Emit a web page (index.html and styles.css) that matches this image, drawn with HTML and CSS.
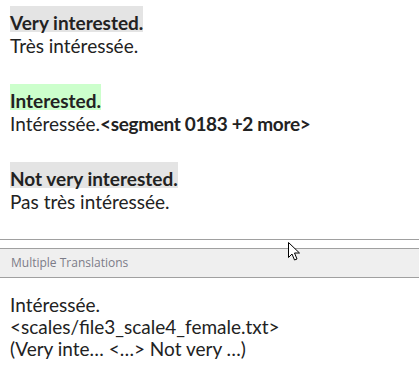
FILE: index.html
```html
<!DOCTYPE html>
<html>
<head>
<meta charset="utf-8">
<link rel="stylesheet" href="styles.css">
</head>
<body>
<div class="segments">
  <div class="entry">
    <div class="src-line"><span class="src grey">Very interested.</span></div>
    <div class="tgt">Très intéressée.</div>
  </div>
  <div class="entry">
    <div class="src-line"><span class="src green">Interested.</span></div>
    <div class="tgt">Intéressée.<b>&lt;segment 0183 +2 more&gt;</b></div>
  </div>
  <div class="entry">
    <div class="src-line"><span class="src grey">Not very interested.</span></div>
    <div class="tgt">Pas très intéressée.</div>
  </div>
</div>
<div class="splitter"></div>
<div class="pane-header">Multiple Translations</div>
<div class="pane-body">
  <div>Intéressée.</div>
  <div>&lt;scales/file3_scale4_female.txt&gt;</div>
  <div>(Very inte… &lt;…&gt; Not very …)</div>
</div>
<svg class="cursor" width="13" height="20" viewBox="0 0 13 20">
  <path d="M0.5 0.5 L0.5 15.5 L4 12 L6.5 18 L9 17 L6.5 11 L11.5 11 Z" fill="#fff" stroke="#000" stroke-width="1" stroke-linejoin="miter"/>
</svg>
</body>
</html>
```
FILE: styles.css
```css
html, body {
  margin: 0;
  padding: 0;
  background: #fff;
}
body {
  width: 419px;
  height: 379px;
  overflow: hidden;
  position: relative;
  font-family: Lato, "Open Sans", sans-serif;
  font-size: 19px;
  color: #222;
}
.segments {
  padding: 6px 10px 0 10px;
  height: 239px;
  box-sizing: border-box;
}
.entry {
  margin-bottom: 26px;
}
.src-line {
  height: 26px;
}
.src {
  display: inline-block;
  box-sizing: border-box;
  height: 26px;
  padding-top: 6px;
  line-height: 22px;
  font-weight: bold;
}
.grey { background: #e4e4e4; }
.green { background: #ccffcc; }
.tgt {
  height: 26px;
  line-height: 26px;
  padding-top: 1px;
  box-sizing: border-box;
}
.tgt b {
  font-weight: bold;
  letter-spacing: -0.35px;
}
.splitter {
  border-top: 1px solid #a0a0a0;
  height: 8px;
}
.pane-header {
  border-top: 1px solid #a0a0a0;
  border-bottom: 1px solid #a0a0a0;
  background: #efefef;
  height: 28px;
  line-height: 28px;
  padding-left: 11px;
  font-family: "Open Sans", sans-serif;
  font-size: 12px;
  color: #7c7c88;
}
.pane-body {
  padding: 16px 10px 0 10px;
  line-height: 22px;
}
.cursor {
  position: absolute;
  left: 288px;
  top: 242px;
}
```
